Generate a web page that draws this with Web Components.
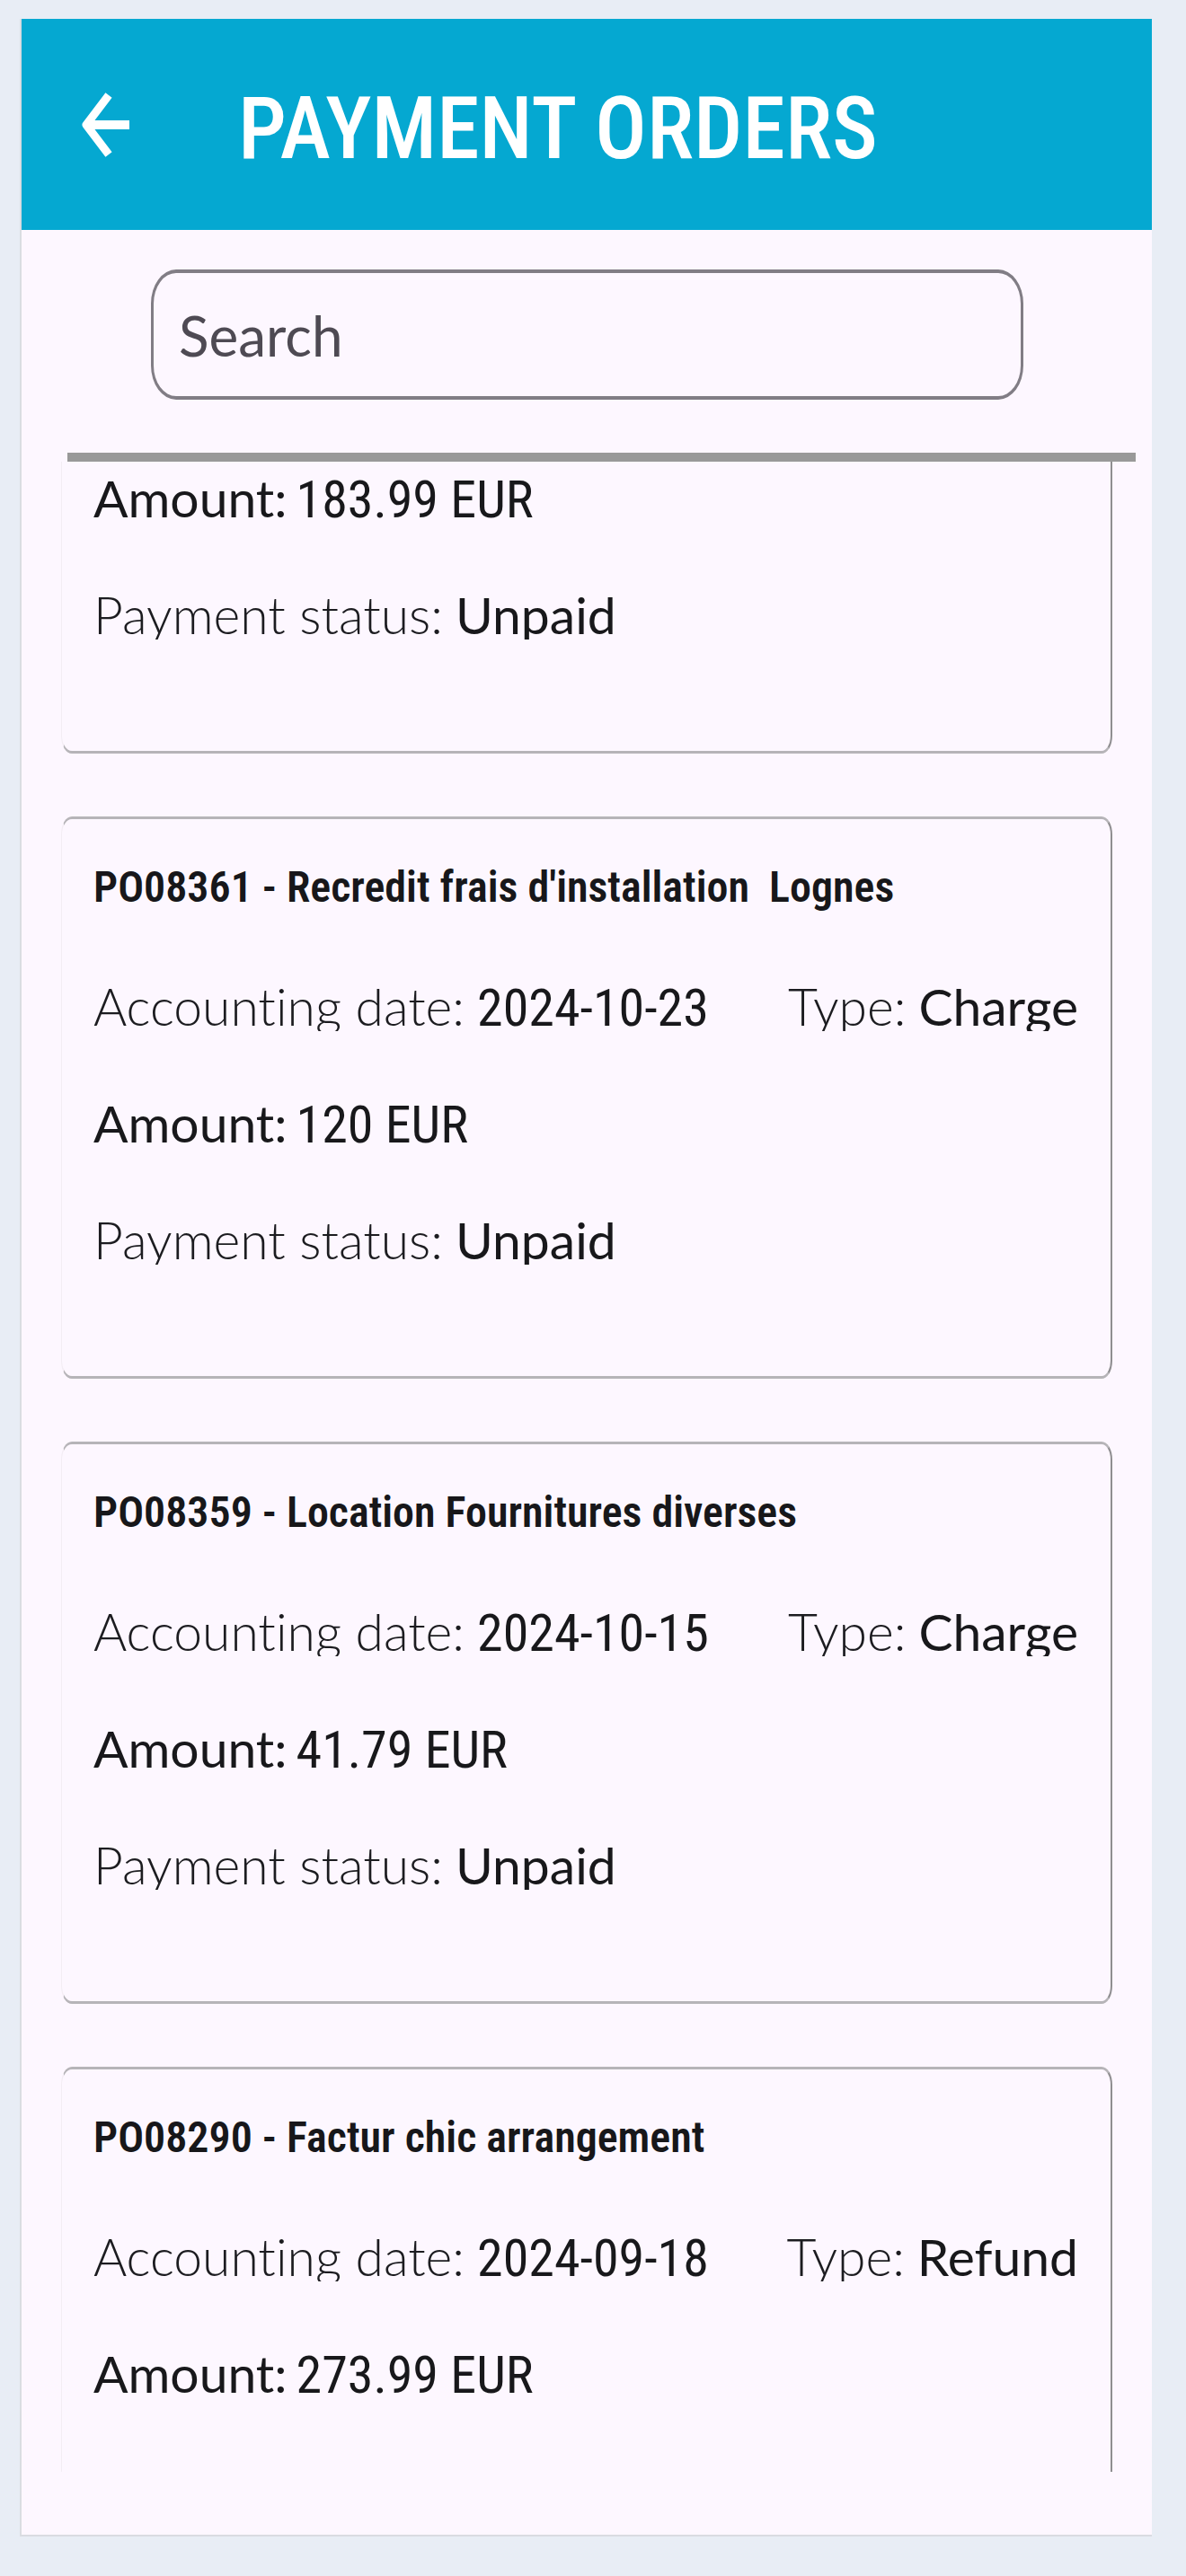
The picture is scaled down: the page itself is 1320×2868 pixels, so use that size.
<!DOCTYPE html>
<html lang="en">
<head>
<meta charset="utf-8">
<meta name="viewport" content="width=device-width, initial-scale=1">
<title>Payment orders</title>
<style>
  body { margin: 0; background: #e8edf5; font-family: Lato, sans-serif; }
</style>
</head>
<body>
<app-screen>
  <app-bar slot="bar">Payment orders</app-bar>
  <search-field slot="search" label="Search"></search-field>
  <payment-order part-shown="end" amount="183.99 EUR" status="Unpaid"></payment-order>
  <payment-order heading="PO08361 - Recredit frais d'installation&nbsp; Lognes" date="2024-10-23" type="Charge" amount="120 EUR" status="Unpaid"></payment-order>
  <payment-order heading="PO08359 - Location Fournitures diverses" date="2024-10-15" type="Charge" amount="41.79 EUR" status="Unpaid"></payment-order>
  <payment-order part-shown="start" heading="PO08290 - Factur chic arrangement" date="2024-09-18" type="Refund" amount="273.99 EUR"></payment-order>
</app-screen>

<template id="screen-template">
  <style>
    :host { display: block; padding: 21px 38px 45px 22px; }
    .panel {
      background: #fdf7ff;
      border-left: 2px solid #dadde2;
      border-bottom: 2px solid #d9dbe1;
      padding-bottom: 70px;
    }
    .search { padding: 44px 143px 59px 144px; }
    hr { margin: 0 18px 0 51px; border: 0; height: 10px; background: #999; }
    main { display: flex; flex-direction: column; gap: 70px; padding: 0 44px; }
  </style>
  <div class="panel">
    <slot name="bar"></slot>
    <div class="search"><slot name="search"></slot></div>
    <hr>
    <main><slot></slot></main>
  </div>
</template>

<template id="bar-template">
  <style>
    :host { display: block; background: #05a8d1; color: #fff; }
    header { display: flex; align-items: center; gap: 116px; height: 235px; padding: 0 57px; }
    button { display: flex; padding: 0; border: 0; background: none; color: inherit; cursor: pointer; }
    svg { display: block; width: 68px; height: 72px; }
    h1 { margin: 0; padding-top: 8px; font: 500 96px/112px "Roboto Condensed", Roboto, sans-serif; text-transform: uppercase; }
  </style>
  <header>
    <button type="button" aria-label="Back">
      <svg viewBox="0 0 68 72" fill="none" stroke="currentColor" stroke-width="9" aria-hidden="true">
        <path d="M40 3 L15 36 L40 69" stroke-linejoin="round"/>
        <path d="M14 36 H63" stroke-width="10"/>
      </svg>
    </button>
    <h1><slot></slot></h1>
  </header>
</template>

<template id="search-template">
  <style>
    :host { display: block; }
    input {
      display: block; box-sizing: border-box; width: 100%; height: 145px; margin: 0; padding: 0 28px;
      border: solid #817d85; border-width: 4px 3px; border-radius: 28px / 38px;
      background: none; color: #1c1b1f; font: 400 62px Lato, sans-serif;
    }
    input::placeholder { color: #4e4a53; opacity: 1; }
  </style>
  <input type="text">
</template>

<template id="order-template">
  <style>
    :host {
      display: block; padding: 46px 36px 124px 35px;
      border: solid #b6b4b8; border-width: 3px 2px 3px 1px; border-left-color: #f3edf4; border-right-color: #8f8e90;
      border-radius: 12px / 20px;
    }
    :host([part-shown="end"]) { border-top: 0; border-top-left-radius: 0; border-top-right-radius: 0; padding-top: 12px; }
    :host([part-shown="start"]) { border-bottom: 0; border-bottom-left-radius: 0; border-bottom-right-radius: 0; padding-bottom: 82px; }
    article { display: grid; gap: 74px; }
    h2 { margin: 0; font: 600 48px/60px "Roboto Condensed", Roboto, sans-serif; color: #17171a; white-space: pre-wrap; }
    .row { display: flex; justify-content: space-between; height: 56px; clip-path: inset(0); }
    p { display: flex; align-items: baseline; gap: 14px; margin: 0; font: 300 57px/56px Lato, sans-serif; font-variant-ligatures: none; color: #1c1c20; }
    b, .strong { font-weight: 400; color: #18181b; }
    .number { font: 400 58px/56px "Roboto Condensed", Roboto, sans-serif; color: #18181b; }
    .strong + .number { margin-left: -4px; }
  </style>
  <article></article>
</template>

<script>
  const stamp = (host, id) => {
    const root = host.attachShadow({ mode: 'open' });
    root.append(document.getElementById(id).content.cloneNode(true));
    return root;
  };

  customElements.define('app-screen', class extends HTMLElement {
    constructor() { super(); stamp(this, 'screen-template'); }
  });

  customElements.define('app-bar', class extends HTMLElement {
    constructor() { super(); stamp(this, 'bar-template'); }
  });

  customElements.define('search-field', class extends HTMLElement {
    connectedCallback() {
      const input = stamp(this, 'search-template').querySelector('input');
      input.placeholder = this.getAttribute('label');
      input.setAttribute('aria-label', this.getAttribute('label'));
    }
  });

  customElements.define('payment-order', class extends HTMLElement {
    connectedCallback() {
      const article = stamp(this, 'order-template').querySelector('article');
      const make = (tag, cls, text) => {
        const el = document.createElement(tag);
        if (cls) el.className = cls;
        if (text) el.textContent = text;
        return el;
      };
      const field = (label, value, labelClass, valueClass) => {
        const p = make('p');
        p.append(make('span', labelClass, label), make('b', valueClass, value));
        return p;
      };
      const row = (...fields) => {
        const div = make('div', 'row');
        div.append(...fields);
        article.append(div);
      };
      const get = name => this.getAttribute(name);
      if (get('heading')) article.append(make('h2', '', get('heading')));
      if (get('date')) row(field('Accounting date:', get('date'), '', 'number'), field('Type:', get('type')));
      if (get('amount')) row(field('Amount:', get('amount'), 'strong', 'number'));
      if (get('status')) row(field('Payment status:', get('status')));
    }
  });
</script>
</body>
</html>
